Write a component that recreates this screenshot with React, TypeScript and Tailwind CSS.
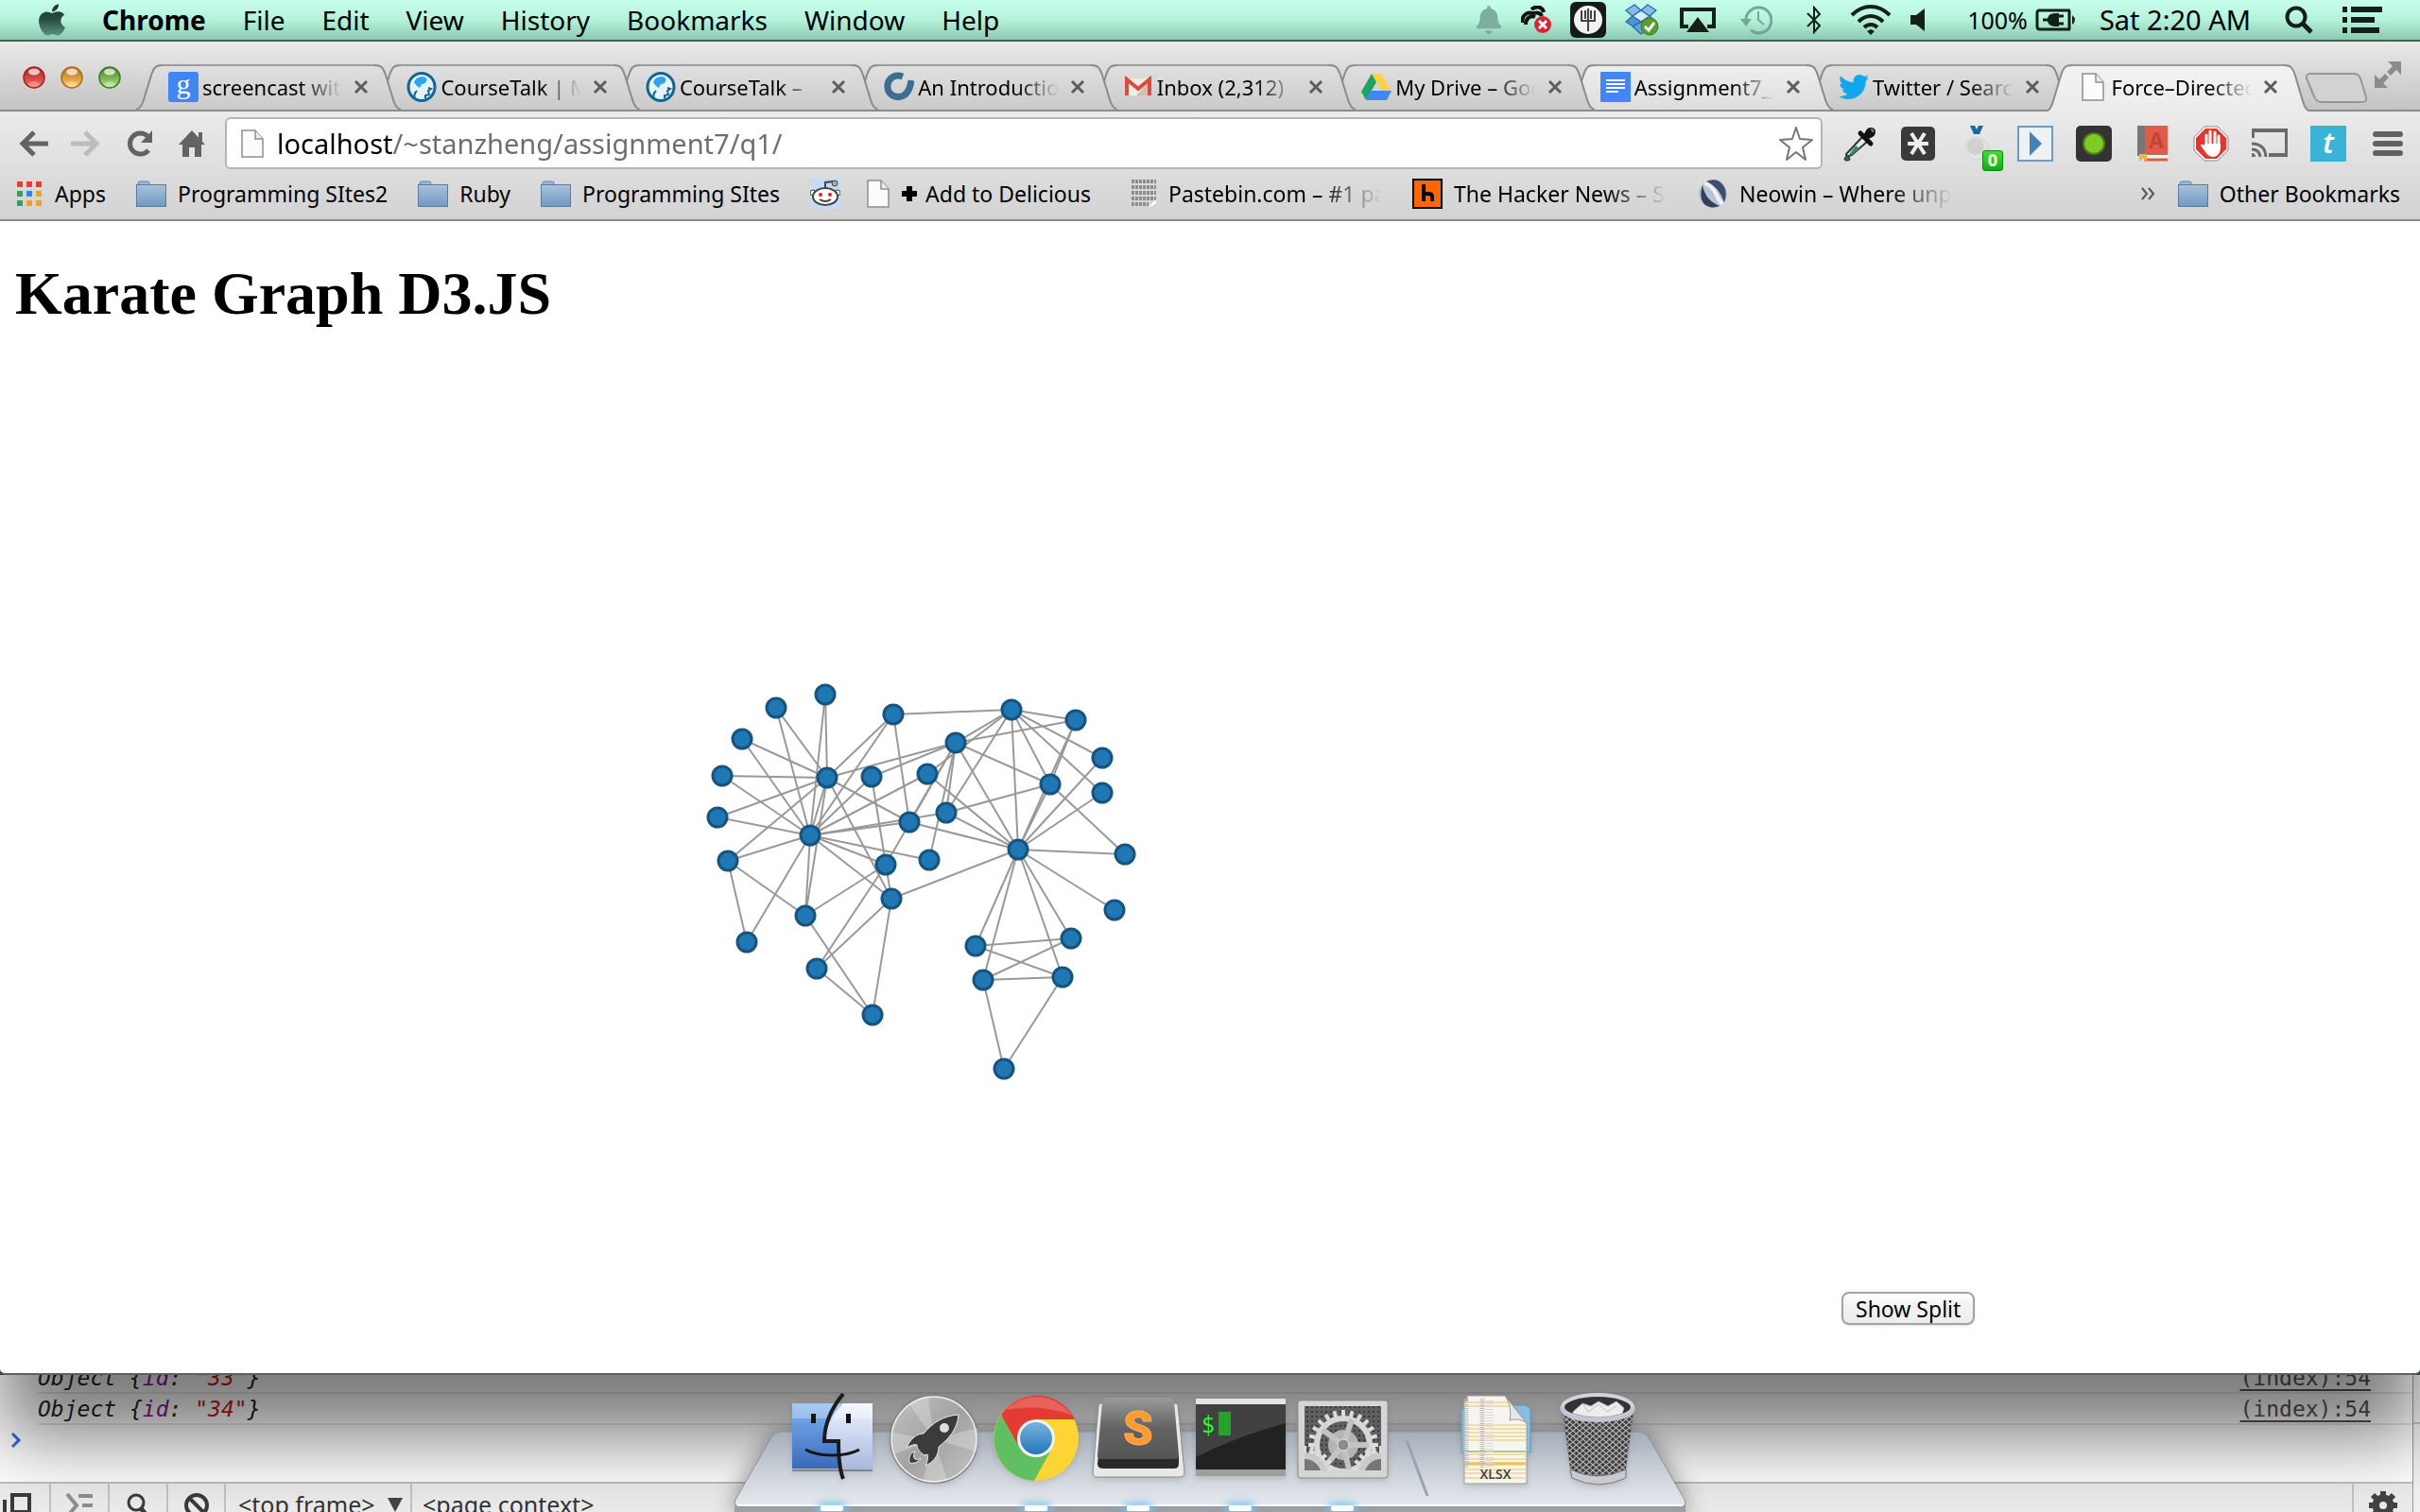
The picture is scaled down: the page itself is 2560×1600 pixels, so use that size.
import React from "react";
import { FaApple, FaTwitter, FaBell } from "react-icons/fa";

type Pt = [number, number];

/* ---------- Karate club graph ---------- */

const NODES: Record<number, Pt> = {
  1: [1061, 504],
  2: [1054, 356],
  3: [995, 391],
  4: [1095, 435],
  5: [1016, 606],
  6: [1024, 642],
  7: [1108, 639],
  8: [1122, 367],
  9: [946, 475],
  10: [967, 515],
  11: [1117, 598],
  12: [1163, 568],
  13: [1174, 509],
  14: [985, 465],
  15: [857, 340],
  16: [805, 354],
  17: [1046, 736],
  18: [1150, 407],
  19: [769, 387],
  20: [965, 424],
  21: [748, 426],
  22: [1150, 444],
  23: [743, 470],
  24: [836, 574],
  25: [848, 630],
  26: [907, 679],
  27: [774, 602],
  28: [921, 520],
  29: [906, 427],
  30: [754, 516],
  31: [929, 361],
  32: [927, 556],
  33: [859, 428],
  34: [841, 489],
};

const LINKS: Record<number, number[]> = {
  1: [2, 3, 4, 5, 6, 7, 8, 9, 11, 12, 13, 14, 18, 20, 22, 32],
  2: [3, 4, 8, 14, 18, 20, 22, 31],
  3: [4, 8, 9, 10, 14, 28, 29, 33],
  4: [8, 13, 14],
  5: [7, 11],
  6: [7, 11, 17],
  7: [17],
  9: [31, 33, 34],
  24: [26, 28, 30, 33, 34],
  25: [26, 28, 32],
  26: [32],
  27: [30, 34],
  29: [32, 34],
  30: [33, 34],
  31: [33, 34],
  32: [33, 34],
  33: [15, 16, 19, 21, 23, 34],
  34: [10, 14, 15, 16, 19, 20, 21, 23, 28],
};

function KarateGraph() {
  return (
    <svg viewBox="0 0 1920 1000" className="mb-[14px] w-[1920px] min-w-0 shrink" role="img" aria-label="Karate club network">
      <g stroke="#999" strokeWidth="2">
        {Object.entries(LINKS).flatMap(([a, list]) =>
          list.map((b) => (
            <line
              key={a + "-" + b}
              x1={NODES[+a][0]}
              y1={NODES[+a][1]}
              x2={NODES[b][0]}
              y2={NODES[b][1]}
            />
          ))
        )}
      </g>
      <g fill="#1f77b4" stroke="#165480" strokeWidth="3">
        {Object.entries(NODES).map(([id, [x, y]]) => (
          <circle key={id} cx={x} cy={y} r="10" />
        ))}
      </g>
    </svg>
  );
}

/* ---------- Menu bar ---------- */

const MENUS = ["File", "Edit", "View", "History", "Bookmarks", "Window", "Help"];

function MenuBar() {
  return (
    <header className="flex h-[44px] shrink-0 items-center border-b-2 border-[#2f6f55] bg-linear-to-b from-[#c6ffec] via-[#b5f3db] to-[#8fcdb3] pr-10 pl-[38px] text-[28px] leading-[40px] text-black">
      <svg width="0" height="0" className="absolute">
        <defs>
          <linearGradient id="appleFill" x1="0" y1="0" x2="0" y2="1">
            <stop offset="0" stopColor="#183a30" />
            <stop offset="0.5" stopColor="#2a4f43" />
            <stop offset="1" stopColor="#5d9683" />
          </linearGradient>
        </defs>
      </svg>
      <FaApple fill="url(#appleFill)" className="h-[38px] w-[34px] shrink-0" aria-label="Apple" />
      <nav className="ml-9 flex items-center gap-[39px]">
        <button className="font-bold">Chrome</button>
        {MENUS.map((m) => (
          <button key={m}>{m}</button>
        ))}
      </nav>
      <div className="ml-auto flex items-center">
        <FaBell className="h-[30px] w-[28px] text-[#7fb09f]" />
        <svg className="ml-5 h-[30px] w-[32px]" viewBox="0 0 32 30">
          <path d="M1 18c0-8 6-12 11-10M5 20c0-7 5-10 10-8M11 4c6-5 12-2 13 3M12 9c4-3 9-1 10 2" stroke="#111" strokeWidth="4" fill="none" />
          <circle cx="23" cy="20" r="9" fill="#dc2436" />
          <path d="M19 16l8 8M27 16l-8 8" stroke="#fff" strokeWidth="3" />
        </svg>
        <svg className="ml-5 h-[38px] w-[38px]" viewBox="0 0 38 38">
          <rect x="0" y="0" width="38" height="38" rx="6" fill="#161a19" />
          <circle cx="19" cy="19" r="15" fill="#f4f4f4" />
          <path d="M12 9v11h14V9M19 7v24M16 9v9M22 9v9" stroke="#444" strokeWidth="2" fill="none" />
        </svg>
        <svg className="ml-5 h-[34px] w-[36px]" viewBox="0 0 36 34">
          <g stroke="#2c6fae" strokeWidth="1.5" strokeLinejoin="round">
            <path d="M1 7l9-6 7 6-9 6z" fill="#86bdec" />
            <path d="M33 7l-9-6-7 6 9 6z" fill="#86bdec" />
            <path d="M1 19l7-6 9 6-7 6z" fill="#4a95dd" />
            <path d="M33 19l-7-6-9 6 7 6z" fill="#86bdec" />
            <path d="M8 13l9-6 9 6-9 6z" fill="#d6ebfb" />
            <path d="M8 24l9 8 9-7-9-6z" fill="#5fa4e4" />
          </g>
          <circle cx="26" cy="24" r="9" fill="#5aa02c" stroke="#3c7a18" />
          <path d="M21 24l4 4 6-8" stroke="#fff" strokeWidth="3" fill="none" />
        </svg>
        <svg className="ml-[22px] h-[28px] w-[38px]" viewBox="0 0 38 28">
          <path d="M9 21H2V3h34v18h-7" stroke="#151f1b" strokeWidth="4" fill="none" />
          <path d="M19 11l12 16H7z" fill="#151f1b" />
        </svg>
        <svg className="ml-[26px] h-[32px] w-[34px]" viewBox="0 0 34 32">
          <path d="M6 18A13.500 13.500 0 1 1 11 27" stroke="#78a695" strokeWidth="3" fill="none" />
          <path d="M0 15h12l-6 8z" fill="#78a695" />
          <path d="M19 7v9l6 5" stroke="#78a695" strokeWidth="2" fill="none" />
        </svg>
        <svg className="ml-9 h-[30px] w-[16px]" viewBox="0 0 16 30">
          <path d="M1 8l13 13-6 7V2l6 7L1 22" stroke="#151f1b" strokeWidth="2" fill="none" />
        </svg>
        <svg className="ml-[30px] h-[32px] w-[44px]" viewBox="0 0 44 32">
          <g stroke="#151f1b" strokeWidth="4" fill="none">
            <path d="M2 11c12-12 28-12 40 0" />
            <path d="M9 18c8-8 18-8 26 0" />
            <path d="M15 24c4-4 10-4 14 0" />
          </g>
          <path d="M18 28l4-2 4 2-4 4z" fill="#151f1b" />
        </svg>
        <svg className="ml-5 h-[24px] w-[16px]" viewBox="0 0 16 24">
          <path d="M0 7h6l9-7v24l-9-7H0z" fill="#151f1b" />
        </svg>
        <span className="ml-[44px] text-[25px]">100%</span>
        <svg className="ml-2 h-[26px] w-[42px]" viewBox="0 0 42 26">
          <path d="M37 3H4Q2 3 2 6v14q0 3 3 3h32M36 3v20" stroke="#151f1b" strokeWidth="3" fill="none" />
          <path d="M39 8q6 5 0 10z" fill="#151f1b" />
          <path d="M8 13h6M25 9h5M25 17h5" stroke="#151f1b" strokeWidth="3" />
          <path d="M25 6v14h-4q-8 0-8-7t8-7z" fill="#151f1b" />
        </svg>
        <span className="ml-[26px] text-[29px] whitespace-nowrap">Sat 2:20 AM</span>
        <svg className="ml-9 h-[30px] w-[30px]" viewBox="0 0 30 30">
          <circle cx="12" cy="12" r="9.500" stroke="#151f1b" strokeWidth="4" fill="none" />
          <path d="M18 18l10 10" stroke="#151f1b" strokeWidth="5" />
        </svg>
        <svg className="ml-[31px] h-[28px] w-[42px]" viewBox="0 0 42 28">
          <path d="M0 3h5M0 14h5M0 25h5M9 3h33M9 14h25M9 25h30" stroke="#151f1b" strokeWidth="6" />
        </svg>
      </div>
    </header>
  );
}

/* ---------- Small shared icons ---------- */

function PageIcon() {
  return (
    <svg className="h-[30px] w-[24px] shrink-0" viewBox="0 0 24 30">
      <path d="M1 1h14l8 9v19H1z" fill="#fbfbfb" stroke="#8e8e8e" strokeWidth="1.500" />
      <path d="M15 1v9h8" fill="#ececec" stroke="#8e8e8e" strokeWidth="1.500" />
    </svg>
  );
}

function FolderIcon() {
  return (
    <svg className="h-[28px] w-[32px] shrink-0" viewBox="0 0 32 28">
      <defs>
        <linearGradient id="folderFill" x1="0" y1="0" x2="0" y2="1">
          <stop offset="0" stopColor="#a9c2dc" />
          <stop offset="1" stopColor="#7099c2" />
        </linearGradient>
      </defs>
      <path d="M2 5V3q0-2 2-2h8q2 0 2 2v2" fill="#9ab7d6" stroke="#6484a8" />
      <rect x="0.500" y="4.500" width="31" height="23" fill="url(#folderFill)" stroke="#5b7b9e" />
    </svg>
  );
}

function CourseTalkIcon() {
  return (
    <svg className="size-8" viewBox="0 0 32 32">
      <ellipse cx="16" cy="16" rx="14" ry="14.500" fill="#e6f2f8" stroke="#0f6695" strokeWidth="3" />
      <path d="M8 11q2-6 9-6 6 1 4 5-1 3-5 3l-2 4-3-2z" fill="#2aa5ef" />
      <path d="M11 20q-4 4-2 8M23 17l3 1-3 2 1 4-4 1v3" stroke="#0f6695" strokeWidth="2" fill="none" />
    </svg>
  );
}

const FAVICONS: Record<string, React.ReactNode> = {
  google: (
    <svg className="size-8" viewBox="0 0 32 32">
      <rect width="32" height="32" rx="3" fill="#4285f4" />
      <text x="16" y="23" textAnchor="middle" fontFamily="Liberation Serif, serif" fontSize="30" fill="#fff">g</text>
    </svg>
  ),
  course: <CourseTalkIcon />,
  intro: (
    <svg className="size-8" viewBox="0 0 32 32">
      <path d="M20 5C9 1 3 10 4 17c1 8 10 12 17 8 5-3 7-8 8-16" stroke="#3c6e92" strokeWidth="7" fill="none" />
    </svg>
  ),
  gmail: (
    <svg className="size-8" viewBox="0 0 32 32">
      <path d="M3 7h26v18H3z" fill="#efece0" />
      <path d="M29 9v16H14z" fill="#c9c4b4" />
      <path d="M4 25V8l12 10L28 8v17" stroke="#df4a3e" strokeWidth="4" fill="none" />
    </svg>
  ),
  drive: (
    <svg className="size-8" viewBox="0 0 32 32">
      <path d="M11 2h10l11 18H22z" fill="#ffcf48" />
      <path d="M11 2l5 9L5 30 0 21z" fill="#1ea362" />
      <path d="M10 20h22l-5 10H5z" fill="#4285f4" />
    </svg>
  ),
  docs: (
    <svg className="size-8" viewBox="0 0 32 32">
      <rect width="32" height="32" rx="1" fill="#4285f4" />
      <path d="M6 9h20M6 13h20M6 17h20M6 21h13" stroke="#fff" strokeWidth="2" />
    </svg>
  ),
  twitter: <FaTwitter className="size-8 text-[#11a6ee]" />,
  page: <PageIcon />,
};

/* ---------- Tabs ---------- */

type TabKind = "normal" | "light" | "active";

const TABS: { icon: string; title: string; kind: TabKind }[] = [
  { icon: "google", title: "screencast with", kind: "normal" },
  { icon: "course", title: "CourseTalk | MOOC", kind: "normal" },
  { icon: "course", title: "CourseTalk –", kind: "normal" },
  { icon: "intro", title: "An Introduction", kind: "normal" },
  { icon: "gmail", title: "Inbox (2,312)", kind: "normal" },
  { icon: "drive", title: "My Drive – Goog", kind: "normal" },
  { icon: "docs", title: "Assignment7_", kind: "light" },
  { icon: "twitter", title: "Twitter / Searc", kind: "normal" },
  { icon: "page", title: "Force–Directed", kind: "active" },
];

const TAB_FILL: Record<TabKind, string> = {
  normal: "bg-linear-to-b from-[#e0e0e1] to-[#cacacb]",
  light: "bg-linear-to-b from-[#eeeeee] to-[#dddddd]",
  active: "bg-linear-to-b from-[#f2f2f2] to-[#ebebeb]",
};

const TAB_STOPS: Record<TabKind, [string, string]> = {
  normal: ["#e0e0e1", "#cacacb"],
  light: ["#eeeeee", "#dddddd"],
  active: ["#f2f2f2", "#ebebeb"],
};

function TabEdge({ kind, right }: { kind: TabKind; right?: boolean }) {
  const id = "edge-" + kind;
  return (
    <svg
      className={right ? "h-full w-7 shrink-0 -scale-x-100" : "h-full w-7 shrink-0"}
      viewBox="0 0 28 50"
      preserveAspectRatio="none"
    >
      <defs>
        <linearGradient id={id} x1="0" y1="0" x2="0" y2="1">
          <stop offset="0" stopColor={TAB_STOPS[kind][0]} />
          <stop offset="1" stopColor={TAB_STOPS[kind][1]} />
        </linearGradient>
      </defs>
      <path d="M0 50C4 49 6 46 8 39L16 12C19 3 21 1 28 1V50z" fill={`url(#${id})`} />
      <path d="M0 50C4 49 6 46 8 39L16 12C19 3 21 1 28 1" fill="none" stroke="#8b8b8b" strokeWidth="2" />
    </svg>
  );
}

function Tab({ index, icon, title, kind }: { index: number; icon: string; title: string; kind: TabKind }) {
  return (
    <div
      className="relative -ml-7 flex h-[50px] min-w-0 flex-1 items-center pr-[34px] pb-[2px] pl-[34px]"
      style={{ zIndex: kind === "active" ? 20 : 10 - index }}
    >
      <div className={kind === "active" ? "absolute inset-0 flex" : "absolute inset-x-0 top-0 bottom-[2px] flex"}>
        <TabEdge kind={kind} />
        <div className={`flex-1 border-t-2 border-[#9a9a9a] ${TAB_FILL[kind]}`} />
        <TabEdge kind={kind} right />
      </div>
      <span className="relative flex w-8 shrink-0 justify-center">{FAVICONS[icon]}</span>
      <button className="relative ml-1 min-w-0 flex-1 overflow-hidden text-left text-[22px] leading-[32px] whitespace-nowrap text-black [mask-image:linear-gradient(to_right,black_70%,transparent)]">
        {title}
      </button>
      <button aria-label={"Close " + title} className="relative ml-3 size-4 shrink-0">
        <svg viewBox="0 0 16 16" className="size-4">
          <path d="M2 2l12 12M14 2L2 14" stroke="#5d5d5d" strokeWidth="3" />
        </svg>
      </button>
    </div>
  );
}

function TrafficLight({ from, to, label }: { from: string; to: string; label: string }) {
  const id = "light-" + label;
  return (
    <button aria-label={label}>
      <svg className="size-6" viewBox="0 0 24 24">
        <defs>
          <linearGradient id={id} x1="0" y1="0" x2="0" y2="1">
            <stop offset="0" stopColor={from} />
            <stop offset="1" stopColor={to} />
          </linearGradient>
        </defs>
        <circle cx="12" cy="12" r="11" fill={`url(#${id})`} stroke={from} strokeWidth="1.500" />
        <ellipse cx="12" cy="6" rx="6" ry="3.500" fill="#fff" opacity="0.7" />
        <ellipse cx="12" cy="19" rx="6" ry="3" fill="#fff" opacity="0.3" />
      </svg>
    </button>
  );
}

function TabStrip() {
  return (
    <div className="flex h-[74px] shrink-0 items-end border-b-2 border-[#8c8c8c] bg-linear-to-b from-[#e9e9e9] to-[#c4c4c4]">
      <div className="mb-[22px] ml-6 flex w-[104px] shrink-0 justify-between">
        <TrafficLight from="#a52420" to="#ff6a60" label="Close" />
        <TrafficLight from="#b06a16" to="#ffd069" label="Minimize" />
        <TrafficLight from="#3d7a22" to="#b4ea87" label="Zoom" />
      </div>
      <div className="-mb-[2px] ml-4 flex min-w-0 flex-1 items-end">
        <div className="flex max-w-[2300px] min-w-0 flex-1 items-end pl-7">
          {TABS.map((t, i) => (
            <Tab key={i} index={i} {...t} />
          ))}
        </div>
        <button aria-label="New tab" className="mb-[9px] -ml-[6px] shrink-0">
          <svg className="h-[32px] w-[66px]" viewBox="0 0 66 32">
            <path d="M6 1h46q5 0 7 5l6 20q1 5-4 5H18q-6 0-8-6L2 6Q1 1 6 1z" fill="#d2d2d2" stroke="#969696" strokeWidth="2" />
          </svg>
        </button>
      </div>
      <button aria-label="Full screen" className="mr-5 mb-[22px] shrink-0">
        <svg className="h-[30px] w-[28px]" viewBox="0 0 28 30">
          <path d="M14 1h14v14l-5-5-6 6-4-4 6-6zM0 15l5 5 6-6 4 4-6 6 5 5H0z" fill="#8b8b8b" />
        </svg>
      </button>
    </div>
  );
}

/* ---------- Toolbar ---------- */

const EXTENSIONS: { name: string; art: React.ReactNode }[] = [
  {
    name: "Color picker",
    art: (
      <>
        <path d="M22 12l5 5L11 31l-5 2-1-3z" fill="#dfeee6" stroke="#333" strokeWidth="2" />
        <path d="M15 21l4 3-8 7-4 1z" fill="#3d8a5d" />
        <path d="M20 8l11 11" stroke="#111" strokeWidth="5" strokeLinecap="round" />
        <path d="M22 11c3-1 3-9 9-9 5 0 6 4 4 8-2 3-7 3-8 6z" fill="#111" />
        <path d="M31 4q3 0 2 3" stroke="#999" strokeWidth="1.500" fill="none" />
        <path d="M6 31q-6 6 0 6t0-6z" fill="#2f6b4a" stroke="#222" />
      </>
    ),
  },
  {
    name: "Asterisk",
    art: (
      <>
        <rect x="1" y="1" width="36" height="36" rx="5" fill="#3a3a3a" />
        <path d="M8 19h22M12 8l14 22M26 8L12 30" stroke="#eee" strokeWidth="4" />
      </>
    ),
  },
  {
    name: "Medal",
    art: (
      <>
        <path d="M12 0h14l-4 9h-6z" fill="#1b6a9c" />
        <path d="M17 0h4l-2 4z" fill="#e4e4e4" />
        <circle cx="19" cy="24" r="12" fill="#e3e3e3" stroke="#c6c6c6" strokeDasharray="2 2" />
        <circle cx="18" cy="22" r="9" fill="#d1d1d1" />
      </>
    ),
  },
  {
    name: "Play",
    art: (
      <>
        <rect x="1" y="1" width="36" height="36" fill="#eef1f4" stroke="#6b9cc4" strokeWidth="2" />
        <path d="M13 6l13 13-13 13z" fill="#4682b4" />
      </>
    ),
  },
  {
    name: "Recorder",
    art: (
      <>
        <rect width="38" height="38" rx="5" fill="#333" />
        <circle cx="19" cy="19" r="12" fill="#4c7c1e" />
        <circle cx="19" cy="19" r="10" fill="#7ecb23" />
      </>
    ),
  },
  {
    name: "Dictionary",
    art: (
      <>
        <path d="M3 0h32v32H3z" fill="#e25b49" />
        <path d="M3 0h8v32H3z" fill="#777" />
        <path d="M8 31h27v6H8z" fill="#f3f3f3" />
        <path d="M10 36h25" stroke="#e25b49" strokeWidth="3" />
        <path d="M5 30h8v8l-4-3-4 3z" fill="#f2b632" />
        <text x="23" y="24" textAnchor="middle" fontFamily="Noto Sans, sans-serif" fontWeight="700" fontSize="23" fill="#c24536">A</text>
      </>
    ),
  },
  {
    name: "Ad blocker",
    art: (
      <>
        <path d="M12 1h14l11 11v14L26 37H12L1 26V12z" fill="#fff" stroke="#888" />
        <path d="M13 3h12l10 10v12L25 35H13L3 25V13z" fill="#e8352c" />
        <path d="M14 22V10M18 20V6M23 20V7M27 22V11" stroke="#fff" strokeWidth="3" strokeLinecap="round" />
        <path d="M12 19h17v5q-1 8-7 9-6 0-9-5l-5-7q1-3 4 0z" fill="#fff" />
      </>
    ),
  },
  {
    name: "Cast",
    art: (
      <>
        <path d="M1 13V5h36v26H18" stroke="#6b6b6b" strokeWidth="4" fill="none" />
        <path d="M0 19q14 0 15 14M0 25q8 0 9 8" stroke="#6b6b6b" strokeWidth="3" fill="none" />
        <path d="M0 29q4 0 4 4H0z" fill="#6b6b6b" />
      </>
    ),
  },
  {
    name: "Timer",
    art: (
      <>
        <rect width="38" height="38" fill="#3ab4d6" />
        <text x="19" y="29" textAnchor="middle" fontFamily="Noto Sans, sans-serif" fontStyle="italic" fontWeight="600" fontSize="30" fill="#fff">t</text>
      </>
    ),
  },
];

function Toolbar() {
  return (
    <div className="flex h-[61px] shrink-0 items-center pt-[6px] pr-4 pl-[19px]">
      <button aria-label="Back">
        <svg className="h-[30px] w-[33px]" viewBox="0 0 33 30">
          <path d="M17 3L5 15l12 12M5 15h27" stroke="#636363" strokeWidth="5" fill="none" />
        </svg>
      </button>
      <button aria-label="Forward" className="ml-[22px]">
        <svg className="h-[30px] w-[33px]" viewBox="0 0 33 30">
          <path d="M16 3l12 12-12 12M1 15h27" stroke="#bcbcbc" strokeWidth="5" fill="none" />
        </svg>
      </button>
      <button aria-label="Reload" className="ml-[26px]">
        <svg className="h-[30px] w-[30px]" viewBox="0 0 30 30">
          <path d="M23 7A11 11 0 1 0 24 22" stroke="#636363" strokeWidth="5" fill="none" />
          <path d="M28 1v13H16z" fill="#636363" />
        </svg>
      </button>
      <button aria-label="Home" className="ml-[26px]">
        <svg className="h-[30px] w-[28px]" viewBox="0 0 28 30">
          <path d="M14 1l14 15h-4v13h-7V19h-6v10H4V16H0z" fill="#636363" />
          <path d="M21 3h4v9h-4z" fill="#636363" />
        </svg>
      </button>
      <div className="ml-[21px] flex h-[55px] min-w-0 flex-1 items-center rounded-[6px] border-2 border-[#b5b5b5] bg-white pr-2 pl-[15px]">
        <PageIcon />
        <input
          aria-label="Address"
          defaultValue="localhost/~stanzheng/assignment7/q1/"
          className="ml-[14px] h-[48px] min-w-0 flex-1 bg-[linear-gradient(to_right,#000_122px,#6c6c6c_122px)] bg-clip-text text-[29px] text-transparent outline-none"
        />
        <button aria-label="Bookmark this page">
          <svg className="size-9" viewBox="0 0 36 36">
            <path d="M18 1l4 12 13 1-10 8 3 13-10-8-10 8 3-13L1 14l13-1z" fill="#fff" stroke="#777" strokeWidth="2" strokeLinejoin="round" />
          </svg>
        </button>
      </div>
      <div className="ml-5 flex shrink-0 items-center gap-6">
        {EXTENSIONS.map((e) => (
          <button key={e.name} aria-label={e.name} className="relative">
            <svg className="h-[38px] w-[38px]" viewBox="0 0 38 38">
              {e.art}
            </svg>
            {e.name === "Medal" && (
              <span className="absolute top-[26px] left-[25px] flex h-[22px] w-[22px] items-center justify-center rounded-[3px] border border-[#0a8a0a] bg-linear-to-b from-[#35e52f] to-[#0caf0c] text-[18px] font-bold text-white">
                0
              </span>
            )}
          </button>
        ))}
        <button aria-label="Menu">
          <svg className="h-[28px] w-[38px]" viewBox="0 0 38 28">
            <path d="M7 4h26M7 14h26M7 24h26" stroke="#616161" strokeWidth="6" strokeLinecap="round" />
          </svg>
        </button>
      </div>
    </div>
  );
}

/* ---------- Bookmarks bar ---------- */

const APP_DOTS = ["#f0383a", "#f0383a", "#f0383a", "#36a05a", "#2c86f5", "#f0a128", "#36a05a", "#f0a128", "#f0a128"];

function Bookmark({ icon, children, fade }: { icon: React.ReactNode; children?: React.ReactNode; fade?: boolean }) {
  return (
    <a href="#" className="flex shrink-0 items-center gap-3">
      {icon}
      {children && (
        <span
          className={
            fade
              ? "w-[226px] overflow-hidden [mask-image:linear-gradient(to_right,black_70%,transparent)]"
              : ""
          }
        >
          {children}
        </span>
      )}
    </a>
  );
}

function BookmarksBar() {
  return (
    <nav className="flex h-[53px] shrink-0 items-center gap-[32px] overflow-hidden pr-[21px] pb-[2px] pl-4 text-[23px] leading-[34px] whitespace-nowrap text-black">
      <Bookmark
        icon={
          <svg className="size-[30px]" viewBox="0 0 30 30">
            {APP_DOTS.map((c, i) => (
              <rect key={i} x={2 + (i % 3) * 10} y={2 + Math.floor(i / 3) * 10} width="6" height="6" fill={c} />
            ))}
          </svg>
        }
      >
        Apps
      </Bookmark>
      <Bookmark icon={<FolderIcon />}>Programming SItes2</Bookmark>
      <Bookmark icon={<FolderIcon />}>Ruby</Bookmark>
      <Bookmark icon={<FolderIcon />}>Programming SItes</Bookmark>
      <div className="mr-[10px] flex items-center gap-7">
        <Bookmark
          icon={
            <svg className="size-8" viewBox="0 0 32 32">
              <rect width="32" height="32" fill="#c5dcf4" />
              <path d="M16 11V4l9-1" stroke="#444" strokeWidth="2" fill="none" />
              <circle cx="26" cy="5" r="3" fill="#aaa" stroke="#444" />
              <circle cx="3" cy="15" r="3" fill="#fff" stroke="#444" />
              <circle cx="29" cy="15" r="3" fill="#fff" stroke="#444" />
              <ellipse cx="16" cy="19" rx="13" ry="9" fill="#fff" stroke="#444" strokeWidth="2" />
              <circle cx="11" cy="17" r="2" fill="#f01818" />
              <circle cx="21" cy="17" r="2" fill="#f01818" />
              <path d="M10 22q6 4 12 0" stroke="#444" strokeWidth="2" fill="none" />
            </svg>
          }
        />
        <Bookmark icon={<PageIcon />}>
          <span className="flex items-center gap-2">
            <svg className="size-[18px]" viewBox="0 0 18 18">
              <path d="M9 1v16M1 9h16" stroke="#000" strokeWidth="6" />
            </svg>
            Add to Delicious
          </span>
        </Bookmark>
      </div>
      <Bookmark
        fade
        icon={
          <svg className="h-8 w-7" viewBox="0 0 28 32">
            <path d="M1 3h26M1 9h26M1 15h26M1 21h26M1 27h18" stroke="#8c8c8c" strokeWidth="4" strokeDasharray="3 1" />
            <path d="M19 30l8-8v4q-3 3-8 4z" fill="#fff" />
          </svg>
        }
      >
        Pastebin.com – #1 paste
      </Bookmark>
      <Bookmark
        fade
        icon={
          <svg className="size-8" viewBox="0 0 32 32">
            <rect x="1" y="1" width="30" height="30" fill="#ff6600" stroke="#000" strokeWidth="2" />
            <path d="M12 6v18M12 16h5q4 0 4 3v5" stroke="#000" strokeWidth="4" fill="none" />
          </svg>
        }
      >
        The Hacker News – Sec
      </Bookmark>
      <Bookmark
        fade
        icon={
          <svg className="size-8" viewBox="0 0 32 32">
            <circle cx="16" cy="16" r="15" fill="#b9c4d0" />
            <path d="M9 3q14-6 20 8 2 8-1 14Q22 8 9 3z" fill="#3c4f6a" />
            <path d="M5 7q3 16 18 22-10 4-17-3Q1 19 5 7z" fill="#2f4059" />
            <path d="M7 5q8 2 12 11 4 8 7 11" stroke="#eef1f4" strokeWidth="4" fill="none" />
          </svg>
        }
      >
        Neowin – Where unprof
      </Bookmark>
      <div className="ml-auto flex items-center gap-6">
        <button aria-label="More bookmarks">
          <svg className="size-4" viewBox="0 0 16 16">
            <path d="M2 2l5 6-5 6M9 2l5 6-5 6" stroke="#555" strokeWidth="2" fill="none" />
          </svg>
        </button>
        <Bookmark icon={<FolderIcon />}>Other Bookmarks</Bookmark>
      </div>
    </nav>
  );
}

/* ---------- Console window behind the browser ---------- */

function LogRow({ id }: { id: string }) {
  return (
    <div className="ml-10 flex h-[33px] shrink-0 items-center justify-between border-b-2 border-[#e8e8e8] pr-11">
      <span className="italic">
        Object {"{"}
        <span className="text-[#881391]">id</span>: <span className="text-[#c41a16]">"{id}"</span>
        {"}"}
      </span>
      <a href="#" className="text-[#555] underline decoration-2 underline-offset-4">
        (index):54
      </a>
    </div>
  );
}

function ConsoleWindow() {
  const cell = "flex h-[46px] items-center justify-center border-r-2 border-[#c4c4c4]";
  return (
    <section className="flex h-[145px] shrink-0 overflow-hidden bg-white">
      <div className="flex min-w-0 flex-1 flex-col">
        <div className="flex min-h-0 flex-1 flex-col justify-end overflow-hidden font-['DejaVu_Sans_Mono',monospace] text-[23px] leading-[30px] text-[#222]">
          <LogRow id="33" />
          <LogRow id="34" />
          <div className="flex h-[60px] shrink-0 pt-2 pl-3">
            <svg className="h-4 w-3" viewBox="0 0 12 16">
              <path d="M1 1l7 7-7 7" stroke="#2f6fe4" strokeWidth="3" fill="none" />
            </svg>
          </div>
        </div>
        <div className="flex h-[32px] shrink-0 overflow-hidden border-t-2 border-[#c0c0c0] bg-[#ececec] text-[25px] text-[#333]">
          <button aria-label="Dock side" className={`${cell} w-[54px] pr-4`}>
            <svg className="h-[28px] w-[30px]" viewBox="0 0 30 28">
              <path d="M10 3h18v18H10zM2 8v19h20" stroke="#3a3a3a" strokeWidth="4" fill="none" />
            </svg>
          </button>
          <button aria-label="Console drawer" className={`${cell} w-[62px]`}>
            <svg className="h-[28px] w-[30px]" viewBox="0 0 30 28">
              <path d="M2 2l10 12L2 26M14 4h15M18 14h11M14 24h15" stroke="#8f8f8f" strokeWidth="4" fill="none" />
            </svg>
          </button>
          <button aria-label="Search" className={`${cell} w-[62px]`}>
            <svg className="h-[28px] w-[24px]" viewBox="0 0 24 28">
              <circle cx="10" cy="11" r="8" stroke="#3a3a3a" strokeWidth="3" fill="none" />
              <path d="M15 17l7 9" stroke="#3a3a3a" strokeWidth="5" />
            </svg>
          </button>
          <button aria-label="Clear console" className={`${cell} w-[61px]`}>
            <svg className="size-[28px]" viewBox="0 0 28 28">
              <circle cx="14" cy="14" r="11" stroke="#3a3a3a" strokeWidth="4" fill="none" />
              <path d="M6 6l16 16" stroke="#3a3a3a" strokeWidth="4" />
            </svg>
          </button>
          <label className={`${cell} relative w-[197px]`}>
            <select aria-label="Frame" className="h-[42px] w-full appearance-none bg-transparent pl-[13px]">
              <option>&lt;top frame&gt;</option>
            </select>
            <svg className="pointer-events-none absolute top-[14px] right-2 h-[16px] w-[16px]" viewBox="0 0 16 16">
              <path d="M0 1h16L8 16z" fill="#444" />
            </svg>
          </label>
          <select aria-label="Context" className="h-[46px] appearance-none bg-transparent pl-[11px]">
            <option>&lt;page context&gt;</option>
          </select>
          <button aria-label="Settings" className="ml-auto flex h-[46px] w-[64px] items-center justify-center border-l-2 border-[#c4c4c4]">
            <svg className="size-8" viewBox="0 0 32 32">
              <path d="M16 1v30M1 16h30M5 5l22 22M27 5L5 27" stroke="#444" strokeWidth="6" />
              <circle cx="16" cy="16" r="8" fill="none" stroke="#444" strokeWidth="7" />
              <circle cx="16" cy="16" r="4" fill="#ececec" />
            </svg>
          </button>
        </div>
      </div>
      <div className="flex w-2 shrink-0 flex-col border-l border-[#9a9a9a] bg-[#f2f2f2]">
        <div className="h-[52px] border-b-2 border-[#c4c4c4]" />
      </div>
    </section>
  );
}

/* ---------- Dock ---------- */

const GEAR_TEETH = Array.from({ length: 24 }, (_, i) => i * 15);

const DOCK_ICONS: { name: string; running: boolean; art: React.ReactNode }[] = [
  {
    name: "Finder",
    running: true,
    art: (
      <>
        <rect x="12" y="13" width="85" height="69" fill="url(#finderLeft)" />
        <path d="M66 13C52 28 47 40 46 53h15c0 12 1 22 3 29h33V13z" fill="url(#finderRight)" />
        <rect x="12" y="13" width="85" height="16" fill="#fff" opacity="0.3" />
        <path d="M12 84h85" stroke="#5a5f70" strokeWidth="2" opacity="0.6" />
        <path d="M32 24h5v10h-5zM69 24h5v10h-5z" fill="#151515" />
        <path d="M66 3C52 20 46 36 46 53h15c0 16 1 30 5 40" stroke="#1b1b1b" strokeWidth="4" fill="none" />
        <path d="M26 62c15 8 42 8 57 0" stroke="#151515" strokeWidth="3" fill="none" />
      </>
    ),
  },
  {
    name: "Launchpad",
    running: false,
    art: (
      <>
        <circle cx="54" cy="51" r="46" fill="url(#steel)" stroke="#7d7d7d" strokeWidth="2" />
        <path d="M54 51L28 14q10-8 20-9zM54 51l46-12q3 14-1 25zM54 51l14 43q-14 5-26 2zM54 51L9 44q-1 12 3 23z" fill="#fff" opacity="0.25" />
        <circle cx="54" cy="51" r="45" fill="none" stroke="#efefef" strokeWidth="1.500" />
        <path d="M80 25C64 26 52 34 43 45c-8 0-14 6-18 15 5-3 9-4 11-3 0 4 3 8 8 11l3-1c1 4 0 8-2 12 9-4 14-11 14-20 9-7 20-18 21-34z" fill="#3b3b3b" stroke="#eee" strokeWidth="1" />
        <circle cx="65" cy="39" r="5" fill="#dedede" />
        <path d="M34 64c-5 1-7 6-6 12 6 1 10-1 12-5-3 2-6 2-7 0-1-3 0-5 1-7z" fill="#3b3b3b" stroke="#eee" strokeWidth="1" />
      </>
    ),
  },
  {
    name: "Google Chrome",
    running: true,
    art: (
      <>
        <circle cx="54" cy="50" r="45" fill="#fcd535" />
        <path d="M54 50L34 56 17 25A45 45 0 0 0 52 95l17-31z" fill="#5fbf61" />
        <path d="M17 25A45 45 0 0 1 95 30H54L34 56z" fill="#e33b33" />
        <path d="M22 20A45 45 0 0 1 91 25q-35-12-69-5z" fill="#fff" opacity="0.2" />
        <circle cx="54" cy="50" r="20" fill="#f4f4f4" />
        <circle cx="54" cy="50" r="17" fill="url(#chromeBlue)" />
      </>
    ),
  },
  {
    name: "Sublime Text",
    running: true,
    art: (
      <>
        <path d="M15 13h78q3 0 3 3l7 70q0 5-5 5H10q-4 0-4-5l6-70q0-3 3-3z" fill="#e8e8e8" stroke="#8a8a8a" />
        <path d="M12 68h85v9q0 5-5 5H17q-6 0-6-5z" fill="#2a2a2a" />
        <path d="M20 7h68q4 0 4 4l5 57q0 4-4 4H15q-4 0-4-4l5-57q0-4 4-4z" fill="url(#keyTop)" />
        <text x="54" y="57" textAnchor="middle" fontFamily="Roboto, sans-serif" fontWeight="900" fontSize="50" fill="#ff9a2e" stroke="#ffb35c" strokeWidth="1">S</text>
      </>
    ),
  },
  {
    name: "Terminal",
    running: true,
    art: (
      <>
        <rect x="7" y="8" width="95" height="82" fill="#222" />
        <path d="M7 14h95v20Q50 48 7 70z" fill="#4a4a4a" opacity="0.8" />
        <path d="M7 8h95v6H7z" fill="#e3e3e3" />
        <path d="M7 83h95v7H7z" fill="#9d9d9d" />
        <text x="20" y="44" textAnchor="middle" fontFamily="DejaVu Sans Mono, monospace" fontSize="24" fill="#2aff2a">$</text>
        <rect x="31" y="22" width="13" height="25" fill="#22a32a" />
      </>
    ),
  },
  {
    name: "System Preferences",
    running: true,
    art: (
      <>
        <rect x="7" y="10" width="95" height="82" rx="3" fill="#d5d5d5" stroke="#8b8b8b" />
        <rect x="14" y="16" width="81" height="68" fill="#5f5f5f" />
        <rect x="14" y="16" width="81" height="68" fill="url(#dots)" />
        <clipPath id="prefsClip">
          <rect x="14" y="16" width="81" height="68" />
        </clipPath>
        <g clipPath="url(#prefsClip)">
          {GEAR_TEETH.map((a) => (
            <rect key={a} x="53" y="20" width="4" height="12" fill="#dcdcdc" transform={`rotate(${a} 55 57)`} />
          ))}
          <circle cx="55" cy="57" r="28" stroke="#d6d6d6" strokeWidth="6" fill="none" />
          <circle cx="55" cy="57" r="16" fill="#b4b4b4" />
          <path d="M55 57l9-27M55 57h27M55 57L33 41M55 57L37 78M55 57l6 26" stroke="#c2c2c2" strokeWidth="6" />
          <circle cx="55" cy="57" r="6" fill="#8b8b8b" stroke="#e6e6e6" />
          {GEAR_TEETH.map((a) => (
            <g key={a}>
              <rect x="12" y="58" width="4" height="12" fill="#dcdcdc" transform={`rotate(${a} 14 90)`} />
              <rect x="93" y="58" width="4" height="12" fill="#dcdcdc" transform={`rotate(${a} 95 90)`} />
            </g>
          ))}
          <circle cx="14" cy="90" r="25" fill="#c9c9c9" />
          <circle cx="14" cy="90" r="18" fill="#777" />
          <circle cx="95" cy="90" r="25" fill="#c9c9c9" />
          <circle cx="95" cy="90" r="18" fill="#777" />
        </g>
      </>
    ),
  },
];

const SHEET_LINES = [12, 16, 36, 40, 44, 48, 52, 67, 72, 76, 83, 87, 92];

const STACK_ART = (
  <>
    <path d="M18 19h6l2-4h60l5 4v46H18z" fill="#86bfe0" stroke="#5c97bb" />
    <path d="M24 5h40l23 29v64H21V11h3z" fill="#f7f5f0" stroke="#999" strokeWidth="1" />
    {SHEET_LINES.map((y) => (
      <path key={y} d={`M22 ${y}h64`} stroke="#f3d489" strokeWidth="1.500" clipPath="url(#sheetClip)" />
    ))}
    <clipPath id="sheetClip">
      <path d="M24 5h40l23 29v64H21V11h3z" />
    </clipPath>
    <path d="M22 77h64" stroke="#f0c24d" strokeWidth="3" />
    <path d="M22 64h64" stroke="#8fb86a" strokeWidth="1.500" />
    <path d="M23 8v74M40 8v74" stroke="#bdbdbd" strokeWidth="5" strokeDasharray="1 1" />
    <path d="M48 10v70" stroke="#d8d8d8" strokeWidth="8" strokeDasharray="1 2" />
    <path d="M64 5c5 8 7 16 5 26 7-2 13-1 18 3z" fill="#e6e6e6" stroke="#999" strokeWidth="1" />
    <text x="54" y="93" textAnchor="middle" fontFamily="Noto Sans, sans-serif" fontSize="14" fontWeight="600" fill="#444">XLSX</text>
  </>
);

const TRASH_ART = (
  <>
    <path d="M17 20l9 70q28 14 57 0l9-70z" fill="#3c3c3c" />
    <path d="M17 20l9 70q28 14 57 0l9-70z" fill="url(#mesh)" />
    <path d="M25 83q29 14 59 0v9q-29 14-57 0z" fill="#c9c9d2" stroke="#777" />
    <ellipse cx="54" cy="17" rx="37" ry="13" fill="#333" stroke="#d3d3de" strokeWidth="4" />
    <path d="M28 22l10-9 9 3 8-5 10 5 9-5 8 7-2 6q-24 8-52 0z" fill="#ededed" stroke="#aaa" />
    <path d="M38 13l6 9 11-8 9 8 10-6" stroke="#bcbcbc" strokeWidth="1" fill="none" />
    <path d="M16 17q1 13 38 14 38-1 38-14" stroke="#c3c3d2" strokeWidth="4" fill="none" />
  </>
);

function DockItem({ name, running, children }: { name: string; running: boolean; children: React.ReactNode }) {
  return (
    <button aria-label={name} className="relative flex h-full w-[108px] shrink-0 flex-col items-center justify-start">
      <svg className="h-[104px] w-[108px] shrink-0 drop-shadow-md" viewBox="0 0 108 104">
        {children}
      </svg>
      {running && (
        <span className="mt-[17px] block h-[6px] w-6 rounded-[2px] bg-white shadow-[0_0_8px_3px_#7cc4ee]" />
      )}
    </button>
  );
}

function Dock() {
  return (
    <div className="absolute inset-x-0 bottom-0 z-30 flex justify-center">
      <div className="relative flex h-[128px] w-[1008px] items-start pl-[50px]">
        <svg className="absolute inset-0 h-full w-full overflow-visible drop-shadow-[0_0_12px_rgba(0,0,0,0.4)]" viewBox="0 0 1008 128" preserveAspectRatio="none">
          <defs>
            <linearGradient id="shelf" x1="0" y1="0" x2="0" y2="1">
              <stop offset="0" stopColor="#a4adb9" />
              <stop offset="0.600" stopColor="#d0d5dc" />
              <stop offset="1" stopColor="#e6e9ee" />
            </linearGradient>
            <linearGradient id="finderLeft" x1="0" y1="0" x2="0" y2="1">
              <stop offset="0" stopColor="#7db4f0" />
              <stop offset="1" stopColor="#3a69bd" />
            </linearGradient>
            <linearGradient id="finderRight" x1="0" y1="0" x2="0" y2="1">
              <stop offset="0" stopColor="#f0f4ff" />
              <stop offset="1" stopColor="#a9b8dd" />
            </linearGradient>
            <linearGradient id="steel" x1="0" y1="0" x2="1" y2="1">
              <stop offset="0" stopColor="#c4c4c4" />
              <stop offset="0.500" stopColor="#a2a2a2" />
              <stop offset="1" stopColor="#c4c4c4" />
            </linearGradient>
            <linearGradient id="chromeBlue" x1="0" y1="0" x2="0" y2="1">
              <stop offset="0" stopColor="#7ab2dc" />
              <stop offset="1" stopColor="#2376bd" />
            </linearGradient>
            <linearGradient id="keyTop" x1="0" y1="0" x2="0" y2="1">
              <stop offset="0" stopColor="#9a9a9a" />
              <stop offset="0.500" stopColor="#636363" />
              <stop offset="1" stopColor="#555" />
            </linearGradient>
            <pattern id="dots" width="5" height="5" patternUnits="userSpaceOnUse">
              <circle cx="2" cy="2" r="1" fill="#2d2d2d" />
            </pattern>
            <pattern id="mesh" width="7" height="6" patternUnits="userSpaceOnUse">
              <path d="M0 0l7 6M7 0L0 6" stroke="#b4b4b4" strokeWidth="1.200" />
            </pattern>
          </defs>
          <path d="M1 119h1006v12H1z" fill="#9aa0a6" />
          <path d="M50 43h906q8 0 12 6l38 66q3 7-4 7H6q-7 0-4-7L40 49q4-6 10-6z" fill="url(#shelf)" stroke="#8a929b" />
          <path d="M4 121h1000" stroke="#fff" strokeWidth="2" />
        </svg>
        {DOCK_ICONS.map((d) => (
          <DockItem key={d.name} name={d.name} running={d.running}>
            {d.art}
          </DockItem>
        ))}
        <svg className="relative h-[128px] w-[54px] shrink-0" viewBox="0 0 54 128">
          <path d="M14 52l22 59" stroke="#9aa3ad" strokeWidth="3" />
        </svg>
        <DockItem name="Downloads" running={false}>
          {STACK_ART}
        </DockItem>
        <DockItem name="Trash" running={false}>
          {TRASH_ART}
        </DockItem>
      </div>
    </div>
  );
}

/* ---------- Desktop ---------- */

export default function App() {
  return (
    <div className="relative flex h-screen flex-col overflow-hidden bg-[#1f4c3a] font-['Noto_Sans',sans-serif]">
      <MenuBar />
      <div className="relative z-10 flex min-h-0 flex-1 flex-col overflow-clip rounded-t-[8px] [overflow-clip-margin:200px] shadow-[0_66px_80px_rgba(0,0,0,0.52)]">
        <TabStrip />
        <div className="border-b-2 border-[#8c8c8c] bg-linear-to-b from-[#ebebeb] to-[#d2d2d2]">
          <Toolbar />
          <BookmarksBar />
        </div>
        <main className="flex flex-1 flex-col rounded-b-[6px] border-b-2 border-[#5f5f5f] bg-white px-4 pb-[44px]">
          <h1 className="mt-10 -mb-4 font-['Liberation_Serif',serif] text-[64px] leading-[74px] font-bold text-black">
            Karate Graph D3.JS
          </h1>
          <div className="mt-auto flex items-end">
            <KarateGraph />
            <button className="mb-[7px] ml-3 h-[35px] shrink-0 rounded-[8px] border-2 border-[#a3a3a3] bg-linear-to-b from-white via-[#f1f1f1] to-[#ededed] px-[13px] text-[23px] leading-[30px] text-black shadow-sm">
              Show Split
            </button>
          </div>
        </main>
      </div>
      <ConsoleWindow />
      <Dock />
    </div>
  );
}
